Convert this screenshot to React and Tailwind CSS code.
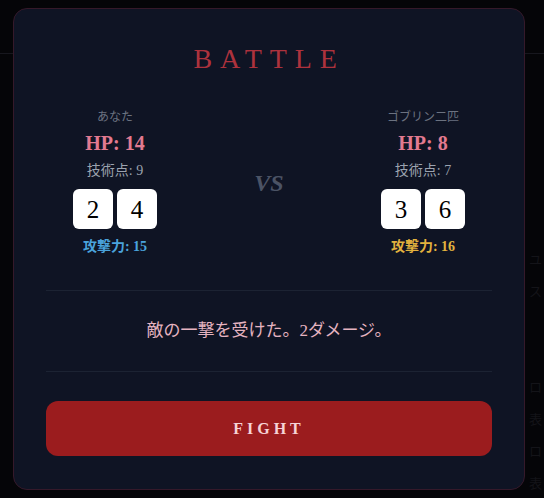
import React from 'react';

const serif = { fontFamily: '"Liberation Serif", "Noto Sans CJK JP", serif' };

function Die({ value }) {
    return (
        <div className="w-10 h-10 rounded-md bg-white flex items-center justify-center text-[25px] leading-none text-black">
            {value}
        </div>
    );
}

function Fighter({ name, hp, skill, dice, attack, attackColor }) {
    return (
        <div className="w-[138px] flex flex-col items-center">
            <div className="text-xs leading-4 text-[#6b7280]">{name}</div>
            <div className="mt-1 text-[20px] leading-7 font-bold text-[#e27a90]">HP: {hp}</div>
            <div className="mt-1 text-sm leading-5 text-[#9ca3af]">技術点: {skill}</div>
            <div className="mt-2 flex gap-1">
                {dice.map((d, i) => <Die key={i} value={d} />)}
            </div>
            <div className={`mt-[9px] text-sm leading-[18px] font-bold ${attackColor}`}>攻撃力: {attack}</div>
        </div>
    );
}

export default function App() {
    const ghost = ['', '', '', 'ユ', 'ス', '', '', 'ロ', '表', 'ロ', '表'];

    return (
        <div className="relative w-[544px] h-[498px] overflow-hidden bg-[#050508]" style={serif}>
            {/* Page behind the dialog */}
            <div className="h-full flex justify-between">
                <div className="w-[13px] pt-[53px]">
                    <div className="h-px bg-[#17171e]" />
                </div>
                <div className="w-[19px] pt-[53px] flex flex-col">
                    <div className="h-px bg-[#17171e]" />
                    <div className="mt-[100px] flex flex-col gap-[12px] text-[13px] leading-[20px] text-[#141419] pl-[4px]">
                        {ghost.map((g, i) => <span key={i}>{g || '\u00a0'}</span>)}
                    </div>
                </div>
            </div>

            {/* Dialog */}
            <div className="absolute left-[13px] top-[8px] w-[512px] h-[482px] rounded-[14px] border border-[#35192a] bg-[#0f1424] px-8 pt-8 flex flex-col">
                <h1 className="text-center text-[28px] leading-9 tracking-[0.28em] text-[#ad323d]">BATTLE</h1>

                <div className="mt-8 flex items-center justify-between">
                    <Fighter name="あなた" hp={14} skill={9} dice={[2, 4]} attack={15} attackColor="text-[#4aa3dc]" />
                    <div className="text-[24px] font-bold italic text-[#4b5365] leading-none">VS</div>
                    <Fighter name="ゴブリン二匹" hp={8} skill={7} dice={[3, 6]} attack={16} attackColor="text-[#e2b23e]" />
                </div>

                <div className="mt-[34px] py-7 border-y border-[#1c2333] text-center text-[17px] leading-6 text-[#e5b3c0]">
                    敵の一撃を受けた。2ダメージ。
                </div>

                <button className="mt-[29px] h-[55px] w-full rounded-xl bg-[#9b1c1e] text-[16px] font-bold tracking-[0.25em] text-[#f6d3d6]">
                    FIGHT
                </button>
            </div>
        </div>
    );
}
